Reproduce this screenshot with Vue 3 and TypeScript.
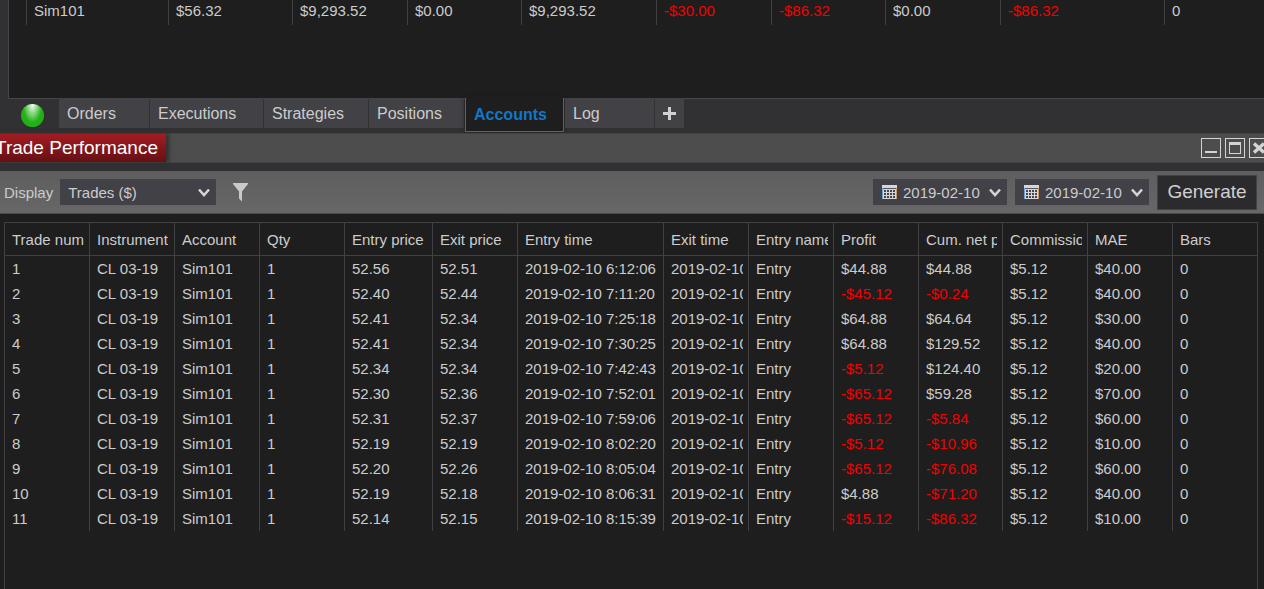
<script setup lang="ts">
import { ref } from 'vue'

interface Column {
  label: string
  width: number
}

interface Tab {
  label: string
  width: number
}

const accountWidths: number[] = [18, 142, 124, 115, 114, 135, 115, 114, 115, 164, 99]
const accountRow: string[] = [
  '', 'Sim101', '$56.32', '$9,293.52', '$0.00', '$9,293.52',
  '-$30.00', '-$86.32', '$0.00', '-$86.32', '0',
]

const tabs: Tab[] = [
  { label: 'Orders', width: 90 },
  { label: 'Executions', width: 113 },
  { label: 'Strategies', width: 104 },
  { label: 'Positions', width: 95 },
  { label: 'Accounts', width: 99 },
  { label: 'Log', width: 89 },
]
const activeTab = ref('Accounts')

const columns: Column[] = [
  { label: 'Trade num', width: 85 },
  { label: 'Instrument', width: 85 },
  { label: 'Account', width: 85 },
  { label: 'Qty', width: 85 },
  { label: 'Entry price', width: 88 },
  { label: 'Exit price', width: 85 },
  { label: 'Entry time', width: 146 },
  { label: 'Exit time', width: 85 },
  { label: 'Entry name', width: 85 },
  { label: 'Profit', width: 85 },
  { label: 'Cum. net profit', width: 84 },
  { label: 'Commission', width: 85 },
  { label: 'MAE', width: 85 },
  { label: 'Bars', width: 84 },
]

// entry price, exit price, entry time, profit, cumulative profit, MAE
const fills: string[][] = [
  ['52.56', '52.51', '6:12:06', '$44.88', '$44.88', '$40.00'],
  ['52.40', '52.44', '7:11:20', '-$45.12', '-$0.24', '$40.00'],
  ['52.41', '52.34', '7:25:18', '$64.88', '$64.64', '$30.00'],
  ['52.41', '52.34', '7:30:25', '$64.88', '$129.52', '$40.00'],
  ['52.34', '52.34', '7:42:43', '-$5.12', '$124.40', '$20.00'],
  ['52.30', '52.36', '7:52:01', '-$65.12', '$59.28', '$70.00'],
  ['52.31', '52.37', '7:59:06', '-$65.12', '-$5.84', '$60.00'],
  ['52.19', '52.19', '8:02:20', '-$5.12', '-$10.96', '$10.00'],
  ['52.20', '52.26', '8:05:04', '-$65.12', '-$76.08', '$60.00'],
  ['52.19', '52.18', '8:06:31', '$4.88', '-$71.20', '$40.00'],
  ['52.14', '52.15', '8:15:39', '-$15.12', '-$86.32', '$10.00'],
]

const day = '2019-02-10'
const trades: string[][] = fills.map(([entry, exit, time, profit, total, mae], i) => [
  String(i + 1), 'CL 03-19', 'Sim101', '1', entry, exit, `${day} ${time}`, day,
  'Entry', profit, total, '$5.12', mae, '0',
])

const isLoss = (value: string): boolean => value.startsWith('-')

const display = ref('Trades ($)')
const from = ref(day)
const to = ref(day)
</script>

<template>
  <div class="page">
    <section class="accounts">
      <table class="grid">
        <colgroup>
          <col v-for="(w, i) in accountWidths" :key="i" :style="{ width: w + 'px' }">
        </colgroup>
        <tbody>
          <tr>
            <td v-for="(value, i) in accountRow" :key="i" :class="{ loss: isLoss(value) }">
              <span class="cell">{{ value }}</span>
            </td>
          </tr>
        </tbody>
      </table>
    </section>

    <nav class="tabs">
      <span class="status"></span>
      <button
        v-for="tab in tabs"
        :key="tab.label"
        type="button"
        class="tab"
        :class="{ active: tab.label === activeTab }"
        :style="{ flexBasis: tab.width + 'px' }"
        @click="activeTab = tab.label"
      >{{ tab.label }}</button>
      <button type="button" class="tab add" aria-label="Add tab">
        <svg width="13" height="13" viewBox="0 0 13 13"><path d="M6.500 0V13M0 6.500H13" stroke="#d0d0d0" stroke-width="3" /></svg>
      </button>
    </nav>

    <header class="titlebar">
      <h1>Trade Performance</h1>
      <div class="window-buttons">
        <button type="button" aria-label="Minimize">
          <svg width="20" height="20" viewBox="0 0 20 20"><rect x="4" y="13" width="12" height="2" fill="#d4d4d4" /></svg>
        </button>
        <button type="button" aria-label="Maximize">
          <svg width="20" height="20" viewBox="0 0 20 20"><path d="M4 4H16V16H4ZM5 7V15H15V7Z" fill="#d4d4d4" fill-rule="evenodd" /></svg>
        </button>
        <button type="button" aria-label="Close">
          <svg width="20" height="20" viewBox="0 0 20 20"><path d="M5 5.500L15 14.500M15 5.500L5 14.500" stroke="#d4d4d4" stroke-width="3.400" /></svg>
        </button>
      </div>
    </header>

    <div class="toolbar">
      <label for="display">Display</label>
      <div class="picker wide">
        <select id="display" v-model="display"><option>Trades ($)</option></select>
        <svg class="chevron" width="12" height="9" viewBox="0 0 12 9"><path d="M1 1.500L6 7L11 1.500" fill="none" stroke="#d4d4d4" stroke-width="2.600" /></svg>
      </div>
      <button type="button" class="filter" aria-label="Filter">
        <svg width="15" height="19" viewBox="0 0 15 19"><path d="M0 0H15V1L9 8.500V18.500L6 15.500V8.500L0 1Z" fill="#c9c9c9" /></svg>
      </button>
      <div class="spacer"></div>
      <div v-for="side in ['from', 'to']" :key="side" class="picker date">
        <select v-if="side === 'from'" v-model="from" aria-label="From date"><option>{{ day }}</option></select>
        <select v-else v-model="to" aria-label="To date"><option>{{ day }}</option></select>
        <svg class="calendar" width="15" height="14" viewBox="0 0 15 14">
          <path d="M0 0H15V14H0Z" fill="#d6d6d6" />
          <path d="M1 3.500H14" stroke="#54545a" />
          <path d="M2 5h2v2h-2zM5 5h2v2h-2zM8 5h2v2h-2zM11 5h2v2h-2zM2 8h2v2h-2zM5 8h2v2h-2zM8 8h2v2h-2zM11 8h2v2h-2zM2 11h2v2h-2zM5 11h2v2h-2zM8 11h2v2h-2zM11 11h2v2h-2z" fill="#45454c" />
          <path d="M0.500 3V14" stroke="#6ba3d6" />
          <path d="M14.500 3V14" stroke="#c99a6a" />
        </svg>
        <svg class="chevron" width="12" height="9" viewBox="0 0 12 9"><path d="M1 1.500L6 7L11 1.500" fill="none" stroke="#d4d4d4" stroke-width="2.600" /></svg>
      </div>
      <button type="button" class="generate">Generate</button>
    </div>

    <main class="trades">
      <div class="panel">
        <table class="grid">
          <colgroup>
            <col v-for="c in columns" :key="c.label" :style="{ width: c.width + 'px' }">
          </colgroup>
          <thead>
            <tr>
              <th v-for="c in columns" :key="c.label" scope="col"><span class="cell">{{ c.label }}</span></th>
            </tr>
          </thead>
          <tbody>
            <tr v-for="row in trades" :key="row[0]">
              <td v-for="(value, i) in row" :key="i" :class="{ loss: isLoss(value) }">
                <span class="cell">{{ value }}</span>
              </td>
            </tr>
          </tbody>
        </table>
      </div>
    </main>
  </div>
</template>

<style>
body {
  background: #1e1e1e;
}
</style>

<style scoped>
.page {
  display: flex;
  flex-direction: column;
  min-height: 100vh;
  overflow: hidden;
  background: #313133;
  color: #cccccc;
  font: 15px/20px "Liberation Sans", Arial, sans-serif;
}

.page * {
  box-sizing: border-box;
}

button,
select {
  margin: 0;
  padding: 0;
  border: 0;
  border-radius: 0;
  color: inherit;
  font: inherit;
}

svg {
  display: block;
}

.grid {
  width: 100%;
  table-layout: fixed;
  border-collapse: separate;
  border-spacing: 0;
}

.grid th,
.grid td {
  height: 25px;
  padding: 0 5px 0 7px;
  border-right: 1px solid #414143;
  font-weight: normal;
  text-align: left;
  vertical-align: middle;
}

.grid th {
  height: 33px;
  padding-top: 2px;
  border-bottom: 1px solid #414143;
}

.grid th:last-child,
.grid td:last-child {
  border-right: 0;
}

.grid .loss {
  color: #f20000;
}

.cell {
  display: block;
  height: 20px;
  overflow: hidden;
  white-space: nowrap;
}

.accounts {
  min-height: 99px;
  margin-left: 8px;
  border: solid #464648;
  border-width: 0 0 1px 1px;
  background: #1e1e1e;
}

.accounts .grid td {
  padding-bottom: 4px;
}

.tabs {
  display: flex;
  height: 35px;
  margin-top: -1px;
  padding-left: 21px;
  align-items: flex-start;
  gap: 1px;
  font-size: 16px;
}

.status {
  width: 23px;
  height: 23px;
  margin: 6px 14px 0 0;
  border-radius: 50%;
  background: radial-gradient(ellipse at 50% 0%, #ffffff 0%, #8fd98b 28%, #22b116 58%, #1fae12 100%);
}

.tab {
  flex: 0 0 auto;
  height: 30px;
  padding: 2px 0 0 8px;
  background: #414146;
  text-align: left;
}

.tab.active {
  height: 34px;
  padding-bottom: 2px;
  border: solid #1177bd;
  border-width: 0 1px 1px;
  background: #1e1e1e;
  box-shadow: 0 0 4px #1e1e1e;
  color: #1177c8;
  font-weight: bold;
}

.tab.add {
  display: flex;
  width: 29px;
  padding: 0;
  align-items: center;
  justify-content: center;
}

.titlebar {
  display: flex;
  height: 30px;
  margin: 0 -5px;
  align-items: stretch;
  justify-content: space-between;
  border: solid #424244;
  border-width: 1px 0;
  background: #4d4d4d;
}

.titlebar h1 {
  margin: 0;
  padding: 0 8px 0 0;
  background: linear-gradient(#a31c22, #641015);
  box-shadow: 3px 0 4px #303030;
  color: #ffffff;
  font-size: 19px;
  font-weight: normal;
  line-height: 27px;
}

.window-buttons {
  display: flex;
  align-items: center;
  gap: 4px;
}

.window-buttons button {
  width: 20px;
  height: 20px;
  background: transparent;
  box-shadow: inset 0 0 0 1px #d4d4d4;
}

.toolbar {
  display: flex;
  height: 43px;
  margin-top: 8px;
  padding: 0 7px 0 4px;
  align-items: center;
  border-bottom: 1px solid #4a4a4a;
  background: linear-gradient(#5e5e5e, #676767);
}

.toolbar label {
  padding-top: 1px;
}

.picker {
  display: grid;
  height: 26px;
  align-items: center;
  background: #414147;
}

.picker > * {
  grid-area: 1 / 1;
}

.picker select {
  width: 100%;
  height: 26px;
  padding: 2px 0 0 8px;
  appearance: none;
  background: transparent;
}

.picker.wide {
  width: 156px;
  margin-left: 7px;
}

.picker.date {
  width: 134px;
  margin-right: 8px;
}

.picker.date select {
  padding-left: 30px;
}

.picker svg {
  pointer-events: none;
}

.chevron {
  margin-right: 6px;
  justify-self: end;
}

.calendar {
  margin-left: 9px;
}

.filter {
  margin-left: 17px;
  background: transparent;
}

.spacer {
  flex: 1;
}

.generate {
  width: 100px;
  height: 35px;
  border: 1px solid #424244;
  background: #2b2b2e;
  color: #d0d0d0;
  font-size: 19px;
}

.trades {
  display: flex;
  flex: 1;
  padding: 8px 6px 0 4px;
  background: #1e1e1e;
}

.panel {
  flex: 1;
  min-width: 0;
  border: solid #414143;
  border-width: 1px 1px 0;
}
</style>
